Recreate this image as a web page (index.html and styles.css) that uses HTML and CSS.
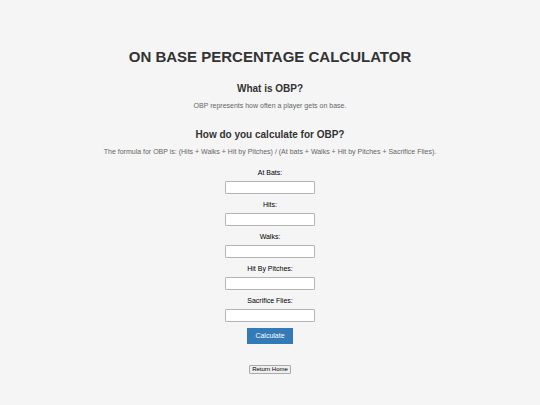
FILE: index.html
```html
<!DOCTYPE html>
<html lang="en">
<head>
    <meta charset="UTF-8">
    <title>On Base Percentage Calculator</title>
    <link rel="stylesheet" href="styles.css">
</head>
<body>
    <h1>ON BASE PERCENTAGE CALCULATOR</h1>

    <h2>What is OBP?</h2>
    <p>OBP represents how often a player gets on base.</p>

    <h2>How do you calculate for OBP?</h2>
    <p>The formula for OBP is: (Hits + Walks + Hit by Pitches) / (At bats + Walks + Hit by Pitches + Sacrifice Flies).</p>

    <form class="obp-form">
        <label for="atBats">At Bats:</label>
        <input type="text" id="atBats" name="atBats">

        <label for="hits">Hits:</label>
        <input type="text" id="hits" name="hits">

        <label for="walks">Walks:</label>
        <input type="text" id="walks" name="walks">

        <label for="hitByPitches">Hit By Pitches:</label>
        <input type="text" id="hitByPitches" name="hitByPitches">

        <label for="sacrificeFlies">Sacrifice Flies:</label>
        <input type="text" id="sacrificeFlies" name="sacrificeFlies">

        <button type="button" class="calculate">Calculate</button>
    </form>

    <button type="button" class="home">Return Home</button>
</body>
</html>
```
FILE: styles.css
```css
body {
    font-family: "Liberation Sans", Arial, sans-serif;
    background-color: #f5f5f5;
    margin: 0;
    padding: 48px 20px 20px;
    text-align: center;
}

h1 {
    margin: 0;
    font-size: 15px;
    line-height: 17px;
    color: #333;
}

h2 {
    margin: 18px 0 6px;
    font-size: 10px;
    line-height: 12px;
    color: #333;
}

p {
    margin: 0 0 11px;
    font-size: 7px;
    line-height: 10px;
    color: #666;
}

.obp-form {
    display: flex;
    flex-direction: column;
    align-items: center;
    margin-bottom: 21px;
}

label {
    margin-bottom: 3px;
    font-size: 7px;
    line-height: 10px;
    color: #000;
}

input[type="text"] {
    width: 90px;
    height: 13px;
    margin-bottom: 6px;
    padding: 2px;
    border: 1px solid #b5b5b5;
    border-radius: 1px;
    box-sizing: border-box;
    background-color: #fff;
    font-size: 7px;
}

.calculate {
    padding: 4px 8px;
    border: none;
    background-color: #337ab7;
    color: #fff;
    font-family: inherit;
    font-size: 7px;
    line-height: 8px;
    cursor: pointer;
}

.calculate:hover {
    background-color: #286090;
}

.home {
    display: block;
    margin: 0 auto;
    padding: 0 2px;
    border: 1px solid #aaa;
    border-radius: 1px;
    background-color: #efefef;
    color: #000;
    font-family: inherit;
    font-size: 6px;
    line-height: 7px;
}
```
